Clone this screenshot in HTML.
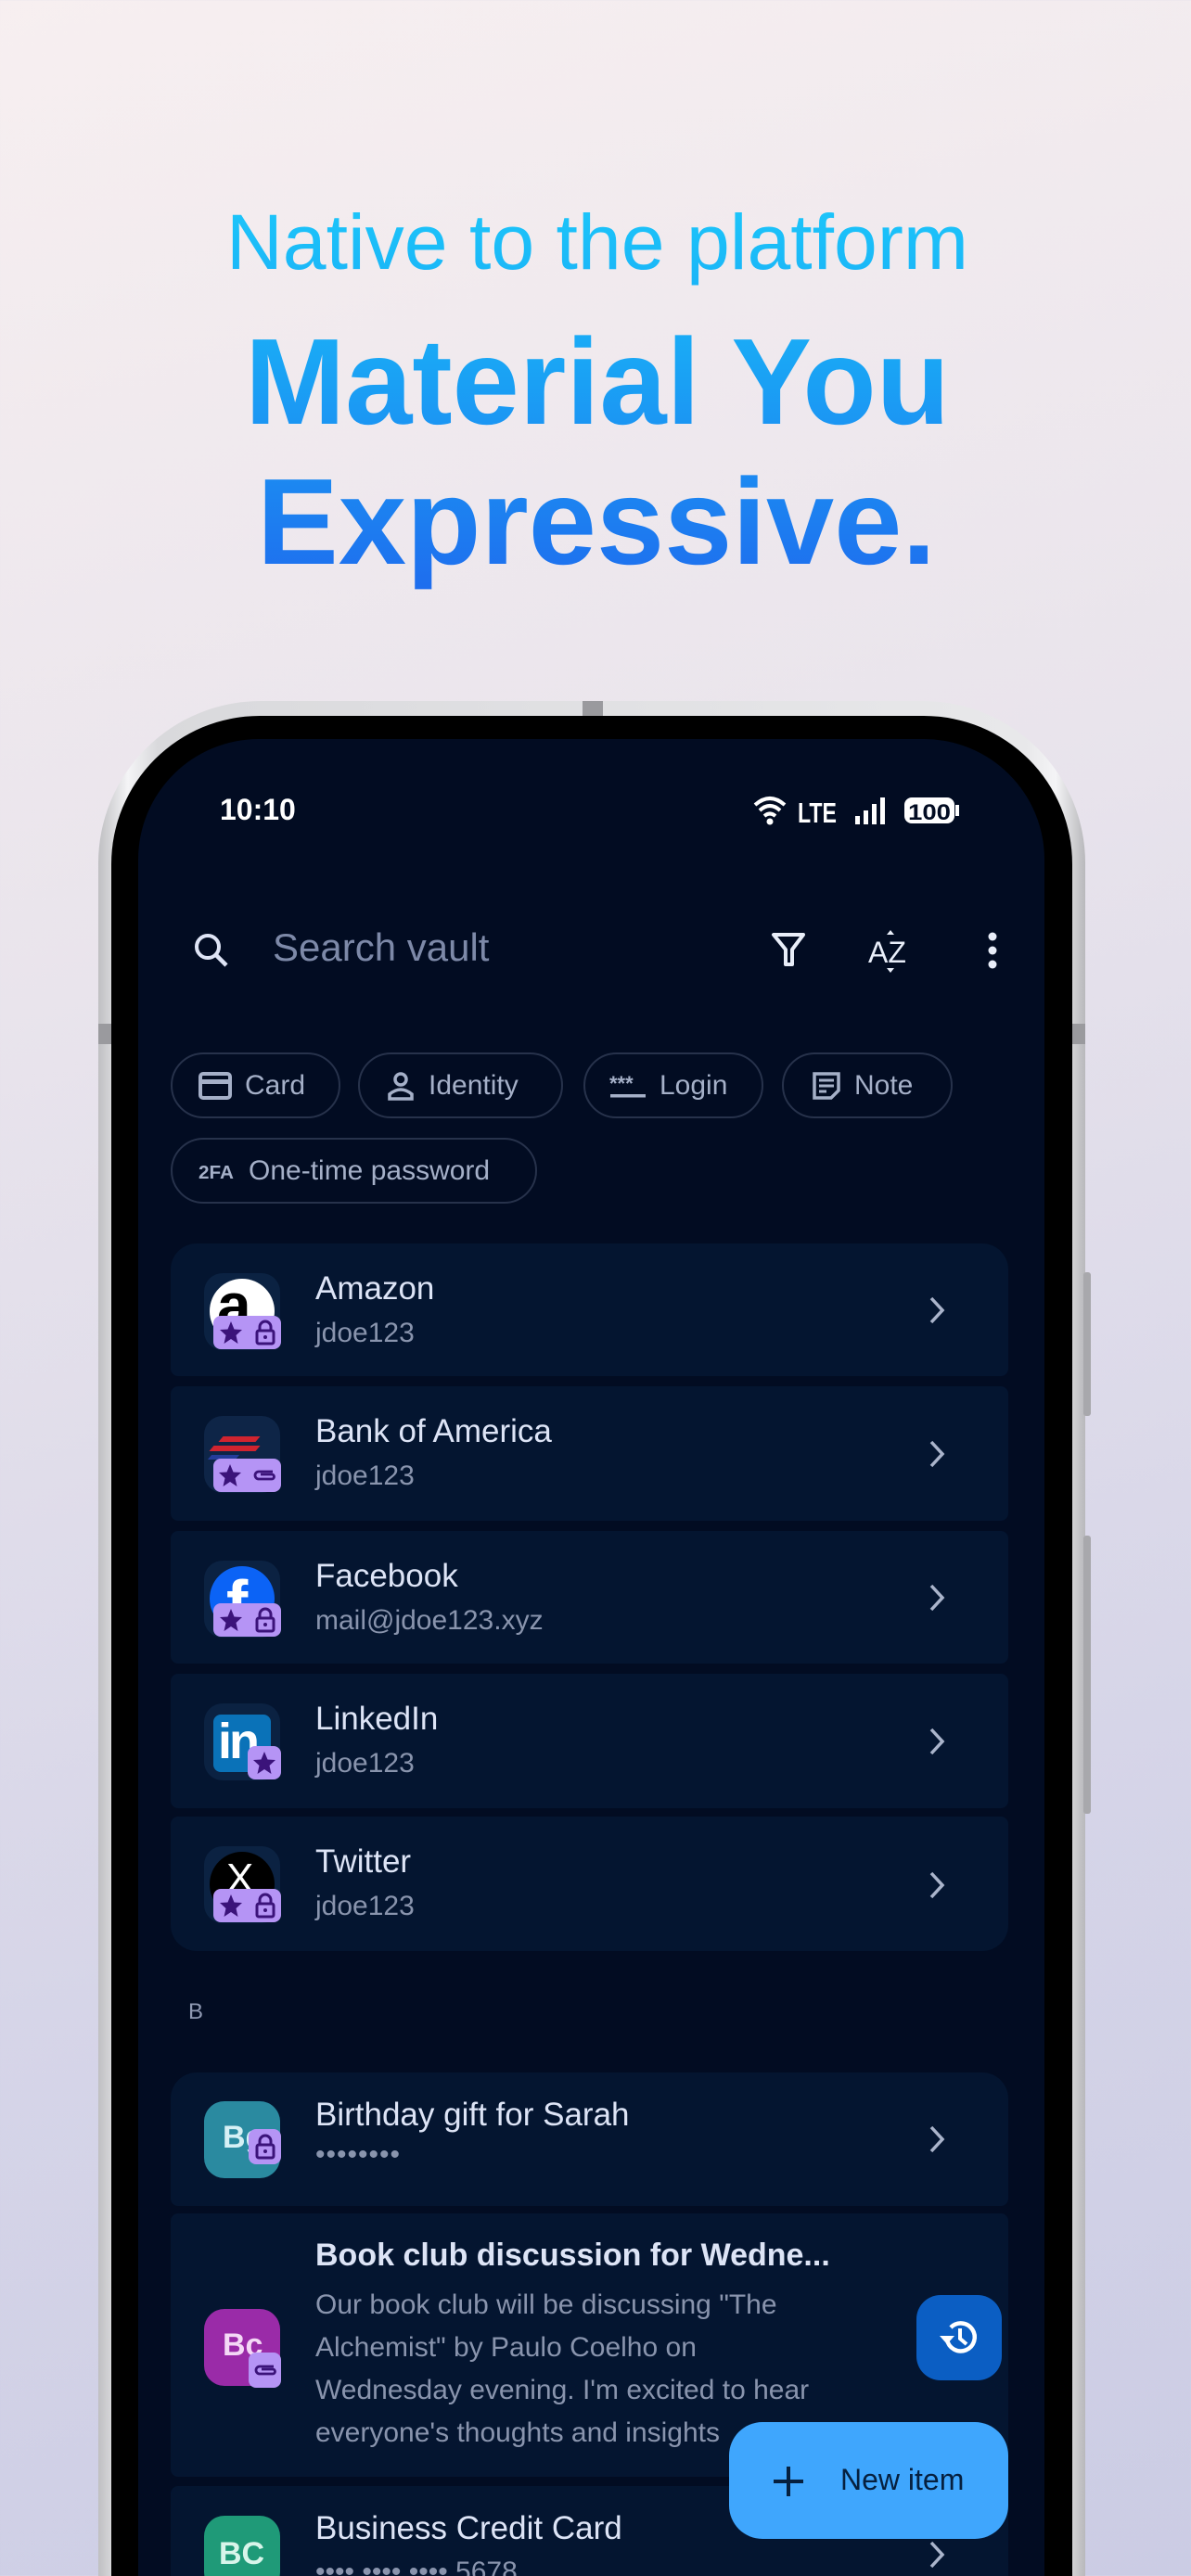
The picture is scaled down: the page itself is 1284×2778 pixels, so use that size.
<!DOCTYPE html>
<html style="width:1284px;height:2778px;overflow:hidden"><head><meta charset="utf-8"><style>
*{margin:0;padding:0;box-sizing:border-box}
html{width:1284px;height:2778px;overflow:hidden}
body{width:1284px;height:2778px;overflow:hidden;position:relative;font-family:"Liberation Sans",sans-serif;
background:linear-gradient(165deg,#f7eff0 0%,#e9e4ec 35%,#d6d5e8 70%,#cbcce4 100%)}
.abs{position:absolute}
.frame{left:106px;top:756px;width:1064px;height:2022px;border-radius:175px 175px 0 0;
background:linear-gradient(90deg,#bfbfc2,#f4f4f6 3%,#d9d9dc 6%,#e8e8ea 94%,#f4f4f6 97%,#b8b8bb);}
.bezel{left:120px;top:772px;width:1036px;height:2006px;border-radius:160px 160px 0 0;background:#000}
.screen{left:149px;top:797px;width:977px;height:1981px;border-radius:130px 130px 0 0;background:#020c22}
.chip{position:absolute;height:71px;border:2px solid #27324b;border-radius:36px;color:#a5b0c8;font-size:30px;display:flex;align-items:center}
.chip svg{margin-right:14px}
.item{position:absolute;left:184px;width:903px;background:#041530;border-radius:8px}
.ic{position:absolute;left:36px;width:82px;height:83px;border-radius:20px;background:#0b2242;overflow:hidden}
.badge{position:absolute;background:#b594f5;border-radius:8px;display:flex;align-items:center;justify-content:space-around}
.ttl{position:absolute;left:156px;font-size:35px;color:#dde4f6}
.sub{position:absolute;left:156px;font-size:30px;color:#8994ad}
</style></head><body>
<svg class="abs" style="left:0;top:180px" width="1284" height="460">
<defs>
<linearGradient id="g1" x1="0" y1="0" x2="0" y2="460" gradientUnits="userSpaceOnUse">
<stop offset="0" stop-color="#1ccdfb"/><stop offset="0.45" stop-color="#1aa6f5"/><stop offset="1" stop-color="#1e6cee"/></linearGradient>
</defs>
<text x="244" y="110" font-family="Liberation Sans" font-size="84" fill="url(#g1)" textLength="800" lengthAdjust="spacingAndGlyphs">Native to the platform</text>
<text x="264" y="277" font-family="Liberation Sans" font-weight="bold" font-size="132" fill="url(#g1)" textLength="760" lengthAdjust="spacingAndGlyphs">Material You</text>
<text x="277" y="428" font-family="Liberation Sans" font-weight="bold" font-size="132" fill="url(#g1)" textLength="732" lengthAdjust="spacingAndGlyphs">Expressive.</text>
</svg>

<div class="abs frame"></div>
<div class="abs" style="left:628px;top:756px;width:22px;height:16px;background:#9a9a9e"></div>
<div class="abs" style="left:1168px;top:1372px;width:8px;height:155px;background:#a8a8ac;border-radius:3px"></div>
<div class="abs" style="left:1168px;top:1656px;width:8px;height:300px;background:#a8a8ac;border-radius:3px"></div>
<div class="abs" style="left:106px;top:1104px;width:14px;height:22px;background:#9a9a9e"></div>
<div class="abs" style="left:1156px;top:1104px;width:14px;height:22px;background:#9a9a9e"></div>
<div class="abs bezel"></div>
<div class="abs screen"></div>

<div class="abs" style="left:237px;top:855px;font-size:32px;color:#fff;font-weight:bold">10:10</div>
<svg class="abs" style="left:810px;top:856px" width="232" height="36">
<path d="M4 12 Q20 -2 36 12 M9 18 Q20 8 31 18 M14 24 Q20 19 26 24" stroke="#fff" stroke-width="4" fill="none"/>
<circle cx="20" cy="30" r="3.5" fill="#fff"/>
<text x="50" y="31" font-family="Liberation Sans" font-weight="bold" font-size="31" fill="#fff" textLength="42" lengthAdjust="spacingAndGlyphs">LTE</text>
<rect x="112" y="24" width="5" height="9" fill="#fff"/><rect x="121" y="18" width="5" height="15" fill="#fff"/><rect x="130" y="11" width="5" height="22" fill="#fff"/><rect x="139" y="4" width="5" height="29" fill="#fff"/>
<rect x="165" y="4" width="54" height="28" rx="8" fill="#fff"/><rect x="220" y="12" width="4" height="12" fill="#fff"/>
<text x="169" y="28" font-family="Liberation Sans" font-weight="bold" font-size="24" fill="#020c22" textLength="46" lengthAdjust="spacingAndGlyphs">100</text>
</svg>

<svg class="abs" style="left:206px;top:1003px" width="44" height="44"><circle cx="18" cy="18" r="12" stroke="#dfe5f6" stroke-width="4" fill="none"/><path d="M27 27 L38 38" stroke="#dfe5f6" stroke-width="4.5"/></svg>
<div class="abs" style="left:294px;top:998px;font-size:42px;color:#7d89a8">Search vault</div>
<svg class="abs" style="left:830px;top:1004px" width="40" height="40"><path d="M4 4 H36 L24 20 V36 H17 V20 Z" fill="none" stroke="#e9eef9" stroke-width="4" stroke-linejoin="round"/></svg>
<svg class="abs" style="left:934px;top:1000px" width="52" height="50"><text x="2" y="38" font-family="Liberation Sans" font-size="32" fill="#e9eef9">AZ</text><path d="M22 8 l4 -5 l4 5 Z M22 44 l4 5 l4 -5 Z" fill="#e9eef9"/></svg>
<svg class="abs" style="left:1060px;top:1004px" width="20" height="44"><circle cx="10" cy="6" r="4.5" fill="#e9eef9"/><circle cx="10" cy="21" r="4.5" fill="#e9eef9"/><circle cx="10" cy="36" r="4.5" fill="#e9eef9"/></svg>

<div class="chip" style="left:184px;top:1135px;width:183px;padding-left:28px"><svg width="36" height="30"><rect x="2" y="2" width="32" height="26" rx="3" fill="none" stroke="#a5b0c8" stroke-width="4"/><rect x="2" y="8" width="32" height="5" fill="#a5b0c8"/></svg>Card</div>
<div class="chip" style="left:386px;top:1135px;width:221px;padding-left:28px"><svg width="32" height="32"><circle cx="16" cy="9" r="6" fill="none" stroke="#a5b0c8" stroke-width="3.5"/><path d="M4 30 V25 Q16 15 28 25 V30 Z" fill="none" stroke="#a5b0c8" stroke-width="3.5"/></svg>Identity</div>
<div class="chip" style="left:629px;top:1135px;width:194px;padding-left:26px"><svg width="40" height="30"><text x="0" y="20" font-family="Liberation Sans" font-weight="bold" font-size="22" fill="#a5b0c8">***</text><rect x="1" y="24" width="38" height="3.5" fill="#a5b0c8"/></svg>Login</div>
<div class="chip" style="left:843px;top:1135px;width:184px;padding-left:30px"><svg width="32" height="32"><path d="M3 3 H29 V21 L21 29 H3 Z" fill="none" stroke="#a5b0c8" stroke-width="3.5"/><path d="M8 10 H24 M8 16 H24 M8 22 H16" stroke="#a5b0c8" stroke-width="3"/></svg>Note</div>
<div class="chip" style="left:184px;top:1227px;width:395px;padding-left:28px"><svg width="40" height="30"><text x="0" y="23" font-family="Liberation Sans" font-weight="bold" font-size="20" fill="#a5b0c8" textLength="38" lengthAdjust="spacingAndGlyphs">2FA</text></svg>One-time password</div>

<div class="item" style="top:1341px;height:143px;border-radius:28px 28px 8px 8px">
 <div class="ic" style="top:32px"><div class="abs" style="left:6px;top:6px;width:70px;height:70px;border-radius:50%;background:#fff"></div><div class="abs" style="left:14px;top:-4px;font-size:66px;font-weight:bold;color:#000">a</div></div>
 <div class="ttl" style="top:29px">Amazon</div><div class="sub" style="top:80px">jdoe123</div>
</div>
<div class="item" style="top:1495px;height:145px">
 <div class="ic" style="top:32px;background:#0e2547"><div class="abs" style="left:18px;top:22px;width:40px;height:6px;background:#d0242f;transform:skewX(-40deg)"></div><div class="abs" style="left:8px;top:32px;width:50px;height:6px;background:#d0242f;transform:skewX(-40deg)"></div><div class="abs" style="left:6px;top:42px;width:30px;height:5px;background:#243c9a;transform:skewX(-40deg)"></div></div>
 <div class="ttl" style="top:29px">Bank of America</div><div class="sub" style="top:80px">jdoe123</div>
</div>
<div class="item" style="top:1651px;height:143px">
 <div class="ic" style="top:32px"><div class="abs" style="left:6px;top:6px;width:70px;height:70px;border-radius:50%;background:#0b63f6"></div><div class="abs" style="left:24px;top:6px;font-size:70px;font-weight:bold;color:#fff">f</div></div>
 <div class="ttl" style="top:29px">Facebook</div><div class="sub" style="top:80px">mail@jdoe123.xyz</div>
</div>
<div class="item" style="top:1805px;height:145px">
 <div class="ic" style="top:32px"><div class="abs" style="left:10px;top:12px;width:62px;height:62px;border-radius:8px;background:#0a72b8"></div><div class="abs" style="left:15px;top:10px;font-size:54px;font-weight:bold;color:#fff;letter-spacing:-3px">in</div></div>
 <div class="ttl" style="top:29px">LinkedIn</div><div class="sub" style="top:80px">jdoe123</div>
</div>
<div class="item" style="top:1959px;height:145px;border-radius:8px 8px 28px 28px">
 <div class="ic" style="top:32px"><div class="abs" style="left:6px;top:6px;width:70px;height:70px;border-radius:50%;background:#000"></div><div class="abs" style="left:24px;top:10px;font-size:44px;color:#fff">X</div></div>
 <div class="ttl" style="top:29px">Twitter</div><div class="sub" style="top:80px">jdoe123</div>
</div>

<div class="abs" style="left:203px;top:2156px;font-size:24px;color:#8f99b2">B</div>

<div class="item" style="top:2235px;height:144px;border-radius:28px 28px 8px 8px">
 <div class="ic" style="top:31px;background:#2a8aa0;border-radius:22px"><div class="abs" style="left:20px;top:20px;font-size:34px;font-weight:bold;color:#d6f0f5">Bg</div></div>
 <div class="ttl" style="top:26px">Birthday gift for Sarah</div><div class="sub" style="top:72px;letter-spacing:1px">••••••••</div>
</div>
<div class="item" style="top:2387px;height:284px">
 <div class="ic" style="top:103px;background:#9a2ba8;border-radius:22px"><div class="abs" style="left:20px;top:20px;font-size:34px;font-weight:bold;color:#f4d8f6">Bc</div></div>
 <div class="ttl" style="top:26px;font-weight:bold;font-size:34px">Book club discussion for Wedne...</div>
 <div class="sub" style="top:76px;line-height:46px;width:560px">Our book club will be discussing "The Alchemist" by Paulo Coelho on Wednesday evening. I'm excited to hear everyone's thoughts and insights</div>
</div>
<div class="item" style="top:2681px;height:140px">
 <div class="ic" style="top:32px;background:#1f9a78;border-radius:22px"><div class="abs" style="left:16px;top:22px;font-size:34px;font-weight:bold;color:#d8f5ea">BC</div></div>
 <div class="ttl" style="top:26px">Business Credit Card</div><div class="sub" style="top:76px">•••• •••• •••• 5678</div>
</div>

<div class="badge" style="left:230px;top:1419px;width:73px;height:36px"><svg width="26" height="26"><path d="M13 1 L16.5 9.5 L25 10 L18.5 16 L20.5 25 L13 20 L5.5 25 L7.5 16 L1 10 L9.5 9.5 Z" fill="#3b137a"/></svg><svg width="22" height="28"><path d="M5 12 V8 a6 6 0 0 1 12 0 V12" fill="none" stroke="#3b137a" stroke-width="3"/><rect x="2" y="12" width="18" height="14" rx="2" fill="none" stroke="#3b137a" stroke-width="3"/><circle cx="11" cy="19" r="2" fill="#3b137a"/></svg></div>
<div class="badge" style="left:230px;top:1573px;width:73px;height:36px"><svg width="26" height="26"><path d="M13 1 L16.5 9.5 L25 10 L18.5 16 L20.5 25 L13 20 L5.5 25 L7.5 16 L1 10 L9.5 9.5 Z" fill="#3b137a"/></svg><svg width="26" height="20"><path d="M22 6 H7 a4 4 0 0 0 0 8 H21 a2.5 2.5 0 0 0 0 -5 H9" fill="none" stroke="#3b137a" stroke-width="2.8"/></svg></div>
<div class="badge" style="left:230px;top:1729px;width:73px;height:36px"><svg width="26" height="26"><path d="M13 1 L16.5 9.5 L25 10 L18.5 16 L20.5 25 L13 20 L5.5 25 L7.5 16 L1 10 L9.5 9.5 Z" fill="#3b137a"/></svg><svg width="22" height="28"><path d="M5 12 V8 a6 6 0 0 1 12 0 V12" fill="none" stroke="#3b137a" stroke-width="3"/><rect x="2" y="12" width="18" height="14" rx="2" fill="none" stroke="#3b137a" stroke-width="3"/><circle cx="11" cy="19" r="2" fill="#3b137a"/></svg></div>
<div class="badge" style="left:267px;top:1883px;width:36px;height:36px"><svg width="26" height="26"><path d="M13 1 L16.5 9.5 L25 10 L18.5 16 L20.5 25 L13 20 L5.5 25 L7.5 16 L1 10 L9.5 9.5 Z" fill="#3b137a"/></svg></div>
<div class="badge" style="left:230px;top:2037px;width:73px;height:36px"><svg width="26" height="26"><path d="M13 1 L16.5 9.5 L25 10 L18.5 16 L20.5 25 L13 20 L5.5 25 L7.5 16 L1 10 L9.5 9.5 Z" fill="#3b137a"/></svg><svg width="22" height="28"><path d="M5 12 V8 a6 6 0 0 1 12 0 V12" fill="none" stroke="#3b137a" stroke-width="3"/><rect x="2" y="12" width="18" height="14" rx="2" fill="none" stroke="#3b137a" stroke-width="3"/><circle cx="11" cy="19" r="2" fill="#3b137a"/></svg></div>
<div class="badge" style="left:268px;top:2296px;width:35px;height:38px"><svg width="22" height="28"><path d="M5 12 V8 a6 6 0 0 1 12 0 V12" fill="none" stroke="#3b137a" stroke-width="3"/><rect x="2" y="12" width="18" height="14" rx="2" fill="none" stroke="#3b137a" stroke-width="3"/><circle cx="11" cy="19" r="2" fill="#3b137a"/></svg></div>
<div class="badge" style="left:268px;top:2537px;width:35px;height:38px"><svg width="26" height="20"><path d="M22 6 H7 a4 4 0 0 0 0 8 H21 a2.5 2.5 0 0 0 0 -5 H9" fill="none" stroke="#3b137a" stroke-width="2.8"/></svg></div>

<svg class="abs" style="left:998px;top:1396px" width="24" height="34"><path d="M6 4 L18 17 L6 30" fill="none" stroke="#aab4cb" stroke-width="3.5"/></svg>
<svg class="abs" style="left:998px;top:1551px" width="24" height="34"><path d="M6 4 L18 17 L6 30" fill="none" stroke="#aab4cb" stroke-width="3.5"/></svg>
<svg class="abs" style="left:998px;top:1706px" width="24" height="34"><path d="M6 4 L18 17 L6 30" fill="none" stroke="#aab4cb" stroke-width="3.5"/></svg>
<svg class="abs" style="left:998px;top:1861px" width="24" height="34"><path d="M6 4 L18 17 L6 30" fill="none" stroke="#aab4cb" stroke-width="3.5"/></svg>
<svg class="abs" style="left:998px;top:2016px" width="24" height="34"><path d="M6 4 L18 17 L6 30" fill="none" stroke="#aab4cb" stroke-width="3.5"/></svg>
<svg class="abs" style="left:998px;top:2290px" width="24" height="34"><path d="M6 4 L18 17 L6 30" fill="none" stroke="#aab4cb" stroke-width="3.5"/></svg>
<svg class="abs" style="left:998px;top:2738px" width="24" height="34"><path d="M6 4 L18 17 L6 30" fill="none" stroke="#aab4cb" stroke-width="3.5"/></svg>

<div class="abs" style="left:988px;top:2475px;width:92px;height:92px;border-radius:26px;background:#0b5ec3"></div>
<svg class="abs" style="left:1010px;top:2497px" width="48" height="48"><path d="M11 26 A15 15 0 1 0 15 13" fill="none" stroke="#fff" stroke-width="4.5"/><path d="M3 22 L11 31 L19 22 Z" fill="#fff"/><path d="M25 14 V25 L32 31" fill="none" stroke="#fff" stroke-width="4"/></svg>
<div class="abs" style="left:786px;top:2612px;width:301px;height:126px;border-radius:36px;background:#3fa6fd"></div>
<svg class="abs" style="left:832px;top:2658px" width="36" height="36"><path d="M18 2 V34 M2 18 H34" stroke="#06203f" stroke-width="4"/></svg>
<div class="abs" style="left:906px;top:2656px;font-size:32px;color:#06203f">New item</div>
</body></html>
